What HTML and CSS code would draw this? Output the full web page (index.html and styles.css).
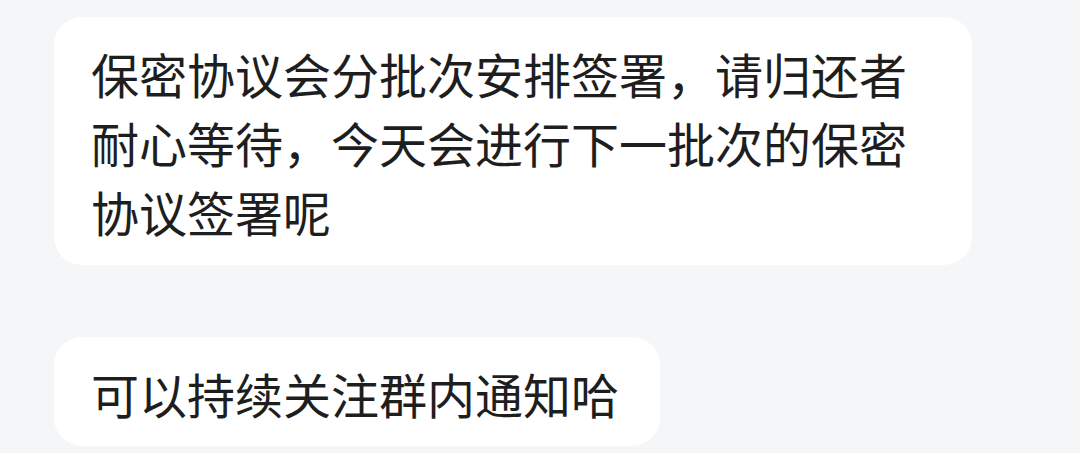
FILE: index.html
```html
<!DOCTYPE html>
<html lang="zh-CN">
<head>
    <meta charset="UTF-8">
    <meta name="viewport" content="width=device-width, initial-scale=1.0">
    <title>消息</title>
    <link rel="stylesheet" href="styles.css">
</head>
<body>

    <div class="chat-list">
        <div class="bubble bubble-wide">
            保密协议会分批次安排签署，请归还者耐心等待，今天会进行下一批次的保密协议签署呢
        </div>

        <div class="bubble">
            可以持续关注群内通知哈
        </div>
    </div>

</body>
</html>
```

FILE: styles.css
```css
body {
    margin: 0;
    background-color: #f5f6f8;
    font-family: "Noto Sans CJK SC", "Noto Sans", sans-serif;
    color: #1e1e1e;
}
.chat-list {
    display: flex;
    flex-direction: column;
    align-items: flex-start;
    gap: 72px;
    padding: 17px 0 0 54px;
}
.bubble {
    background-color: #ffffff;
    border-radius: 28px;
    padding: 22px 41px 18px 37px;
    font-size: 48px;
    line-height: 69px;
}
.bubble-wide {
    width: 844px; /* wraps at 17 characters a line */
    padding-right: 37px;
    padding-bottom: 19px;
}
```
